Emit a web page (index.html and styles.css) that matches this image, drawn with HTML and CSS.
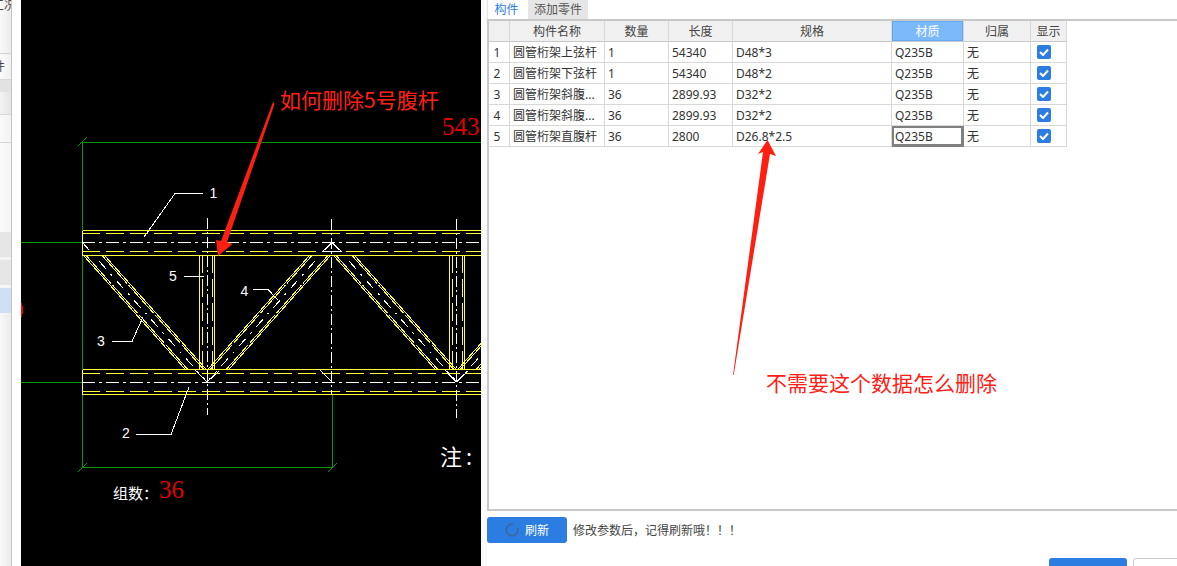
FILE: index.html
```html
<!DOCTYPE html>
<html lang="zh">
<head>
<meta charset="utf-8">
<title>构件</title>
<link rel="stylesheet" href="styles.css">
</head>
<body>
<div class="page">
  <div class="sidebar">
    <div class="strip">
      <div class="s-item s-a"><span>工况</span></div>
      <div class="s-item s-b"><span>件</span></div>
      <div class="s-item s-c"></div>
      <div class="s-item s-d"></div>
      <div class="s-item s-e"></div>
      <div class="s-item s-f"></div>
      <div class="s-item s-g"></div>
      <div class="s-item s-h"></div>
      <div class="s-item s-i"></div>
      <div class="s-item s-j"></div>
      <div class="s-item s-k"></div>
    </div>
    <div class="strip-gap"></div>
  </div>

  <svg class="cad" width="460" height="566" viewBox="21 0 460 566" shape-rendering="crispEdges">
    <defs>
      <g id="diag">
        <path class="ye" d="M83.1 255 184.9 369M104.1 255 205.9 369"/>
        <path class="ye-in" d="M85.6 255 187.4 369M101.6 255 203.4 369"/>
        <path class="wh-diag" d="M82 242 207 382"/>
      </g>
      <g id="post">
        <path class="ye" d="M199.5 255V369M214.5 255V369"/>
        <path class="ye-dash" d="M202.5 255V369M212.5 255V369"/>
      </g>
    </defs>
    <ellipse class="red-fill" cx="21" cy="310" rx="2" ry="7"/>
    <path class="gr" d="M82.5 467V142.5H481M21 242.5H82M21 382.5H82M82 467.5H332M332.5 467V394"/>
    <path class="gr-thin" d="M78 146 87 137M78 472 87 463M328 472 337 463"/>

    <use href="#diag"/>
    <use href="#diag" transform="translate(414 0) scale(-1 1)"/>
    <use href="#diag" transform="translate(250 0)"/>
    <use href="#diag" transform="translate(664 0) scale(-1 1)"/>
    <use href="#post"/>
    <use href="#post" transform="translate(249.5 0)"/>

    <path class="ye" d="M82.5 230.5H481M82.5 255.5H481M82.5 230.5V255.5M82.5 369.5H481M82.5 394.5H481M82.5 369.5V394.5"/>
    <path class="ye-dash" d="M82 233.5H481M82 251.5H481M82 373.5H481M82 391.5H481"/>
    <path class="wh-center" d="M82 242.5H481M82 382.5H481"/>
    <path class="wh-axis" d="M207.5 218V415M331.5 219V394M456.5 219V418"/>
    <path class="wh" d="M323 251H341L332 243ZM194 369 207 382 219 371M319 369 332 382M456 382 444 369M456 382 468 371"/>

    <path class="wh" d="M144 237 175 193.5H203M184 276.5H204M253 289.5H268L278 300M112 341.5H132L143 317M136 434.5H171L189 387"/>
    <text class="num" x="209.5" y="198">1</text>
    <text class="num" x="169" y="281">5</text>
    <text class="num" x="240.5" y="296">4</text>
    <text class="num" x="97" y="346">3</text>
    <text class="num" x="122" y="438">2</text>
    <text class="caption" x="113" y="499">组数：</text>
    <text class="figure" x="159" y="498">36</text>
    <text class="figure" x="442" y="135">543</text>
    <text class="note" x="440" y="465">注<tspan dx="4">:</tspan></text>
  </svg>

  <div class="gutter"></div>

  <main class="panel">
    <div class="tabs">
      <div class="tab tab-on">构件</div>
      <div class="tab tab-off">添加零件</div>
    </div>
    <div class="grid-box">
      <table class="grid">
        <colgroup>
          <col class="c-idx"><col class="c-name"><col class="c-qty"><col class="c-len"><col class="c-spec"><col class="c-mat"><col class="c-own"><col class="c-show">
        </colgroup>
        <thead>
          <tr><th></th><th>构件名称</th><th>数量</th><th>长度</th><th>规格</th><th class="th-on">材质</th><th>归属</th><th>显示</th></tr>
        </thead>
        <tbody>
          <tr><td class="idx">1</td><td>圆管桁架上弦杆</td><td>1</td><td>54340</td><td>D48*3</td><td>Q235B</td><td>无</td><td class="show"><span class="check"><svg width="10" height="8" viewBox="0 0 10 8"><path d="M1 4 4 7 9 1.5"/></svg></span></td></tr>
          <tr><td class="idx">2</td><td>圆管桁架下弦杆</td><td>1</td><td>54340</td><td>D48*2</td><td>Q235B</td><td>无</td><td class="show"><span class="check"><svg width="10" height="8" viewBox="0 0 10 8"><path d="M1 4 4 7 9 1.5"/></svg></span></td></tr>
          <tr><td class="idx">3</td><td>圆管桁架斜腹...</td><td>36</td><td>2899.93</td><td>D32*2</td><td>Q235B</td><td>无</td><td class="show"><span class="check"><svg width="10" height="8" viewBox="0 0 10 8"><path d="M1 4 4 7 9 1.5"/></svg></span></td></tr>
          <tr><td class="idx">4</td><td>圆管桁架斜腹...</td><td>36</td><td>2899.93</td><td>D32*2</td><td>Q235B</td><td>无</td><td class="show"><span class="check"><svg width="10" height="8" viewBox="0 0 10 8"><path d="M1 4 4 7 9 1.5"/></svg></span></td></tr>
          <tr><td class="idx">5</td><td>圆管桁架直腹杆</td><td>36</td><td>2800</td><td>D26.8*2.5</td><td class="td-on">Q235B</td><td>无</td><td class="show"><span class="check"><svg width="10" height="8" viewBox="0 0 10 8"><path d="M1 4 4 7 9 1.5"/></svg></span></td></tr>
        </tbody>
      </table>
    </div>
    <div class="actions">
      <button class="btn btn-refresh">
        <svg class="spin" width="14" height="14" viewBox="0 0 14 14"><circle cx="7" cy="7" r="5.8" pathLength="100" stroke-dasharray="84 16" transform="rotate(-20 7 7)"/></svg>
        <span>刷新</span>
      </button>
      <span class="hint">修改参数后，记得刷新哦！！！</span>
    </div>
    <div class="footer">
      <button class="btn btn-ok"></button>
      <button class="btn btn-cancel"></button>
    </div>
  </main>

  <svg class="marks" width="1177" height="566" viewBox="0 0 1177 566">
    <polygon class="mark" points="273,102 274.5,104 227,242 232.5,244 218,256 216,240 221,241"/>
    <polygon class="mark" points="733,375 763,152 758,154 767.5,140 776,156 770,154 733.7,375"/>
    <text class="mark-text" x="280" y="108">如何删除5号腹杆</text>
    <text class="mark-text" x="766" y="391">不需要这个数据怎么删除</text>
  </svg>
</div>
</body>
</html>
```

FILE: styles.css
```css
* { box-sizing: border-box; }
html, body { margin: 0; padding: 0; background: #fff; }
body {
  font-family: "Noto Sans", "Noto Sans CJK SC", sans-serif;
  font-size: 12px;
  color: #333;
}
.page {
  position: relative;
  display: flex;
  width: 1177px;
  height: 566px;
  overflow: hidden;
}

/* clipped window behind the drawing */
.sidebar { display: flex; flex: 0 0 21px; height: 566px; }
.strip {
  flex: 0 0 12px;
  display: flex;
  flex-direction: column;
  overflow: hidden;
  border-right: 1px solid #c4c4c4;
  background: linear-gradient(to right, #f9f9f9, #ececec);
}
.strip-gap { flex: 1; background: #fff; }
.s-item { display: flex; justify-content: flex-end; flex: none; overflow: hidden; white-space: nowrap; line-height: 14px; }
.s-item span { flex: none; color: #444; }
.s-a { height: 54px; border-bottom: 1px solid #d4d4d4; margin-bottom: 1px; }
.s-a span { margin-top: -1px; margin-right: -5px; height: 14px; }
.s-b { height: 25px; background: linear-gradient(to right, #fbfbfb, #f0f0f0); border-bottom: 1px solid #d8d8d8; align-items: center; }
.s-b span { margin-right: 6px; }
.s-c { height: 12px; background: #e2e2e2; }
.s-d { height: 23px; background: linear-gradient(to right, #f4f4f4, #e4e4e4); border-bottom: 1px solid #d8d8d8; }
.s-e { height: 28px; background: linear-gradient(to right, #fafafa, #f2f2f2); border-bottom: 1px solid #d8d8d8; }
.s-f { height: 89px; background: linear-gradient(to right, #fafafa, #f4f4f4); }
.s-g { height: 25px; background: #e6e6e6; }
.s-h { height: 3px; background: #f4f4f4; }
.s-i { height: 25px; background: #e6e6e6; }
.s-j { height: 3px; background: #f6f6f6; }
.s-k { height: 25px; background: #cfe0f5; }

/* CAD drawing */
.cad { flex: 0 0 460px; display: block; background: #000; }
.gr { fill: none; stroke: #009a00; stroke-width: 1; }
.gr-thin { fill: none; stroke: #009a00; stroke-width: 1; }
.ye { fill: none; stroke: #ffff33; stroke-width: 1; }
.ye-in { fill: none; stroke: #ffff33; stroke-width: 1; stroke-dasharray: 38 2; }
.ye-dash { fill: none; stroke: #ffff33; stroke-width: 1; stroke-dasharray: 18 6; }
.wh { fill: none; stroke: #fff; stroke-width: 1; }
.wh-center { fill: none; stroke: #fff; stroke-width: 1; stroke-dasharray: 13 4 3 4; }
.wh-axis { fill: none; stroke: #fff; stroke-width: 1; stroke-dasharray: 11 3 2 3; }
.wh-diag { fill: none; stroke: #fff; stroke-width: 1; stroke-dasharray: 10 7 2 7; }
.red-fill { fill: #f00000; }
.num { fill: #fff; font: 14px "Liberation Sans", sans-serif; }
.caption { fill: #fff; font: 15px "Noto Sans CJK SC", sans-serif; }
.figure { fill: #e00000; font: 25px "Liberation Serif", serif; }
.note { fill: #fff; font: 22px "Noto Sans CJK SC", sans-serif; }

.gutter { flex: 0 0 6px; background: #fafafa; }

/* right panel */
.panel { flex: 1; min-width: 0; display: flex; flex-direction: column; background: #fff; }
.tabs { display: flex; height: 19px; flex: none; }
.tab { display: flex; align-items: center; justify-content: center; height: 19px; line-height: 16px; }
.tab-on { width: 38px; margin-right: 3px; color: #2b7de1; border-left: 1px solid #e4e4e4; }
.tab-off { width: 60px; background: #e6e6e6; color: #555; }
.grid-box {
  flex: none;
  height: 492px;
  border: 2px solid #c8c8c8;
  border-right: 0;
}
.grid { table-layout: fixed; width: 578px; border-collapse: separate; border-spacing: 0; }
.c-idx { width: 21px; }
.c-name { width: 95px; }
.c-qty { width: 64px; }
.c-len { width: 64px; }
.c-spec { width: 159px; }
.c-mat { width: 72px; }
.c-own { width: 67px; }
.c-show { width: 36px; }
.grid th, .grid td {
  height: 21px;
  padding: 1px 3px 0 3px;
  border-right: 1px solid #d8d8d8;
  border-bottom: 1px solid #d8d8d8;
  white-space: nowrap;
  overflow: hidden;
  line-height: 16px;
}
.grid th { font-weight: 400; background: #f0f0f0; text-align: center; padding: 1px 0 0; color: #444; border-bottom-color: #c8c8c8; }
.grid th.th-on { background: #7cb9fa; color: #fff; box-shadow: inset 0 0 0 1px #62a8f2; }
.grid td.idx { text-align: center; padding: 1px 4px 0 0; background: #fff; }
.grid td.td-on { box-shadow: inset 0 0 0 2px #808080; border-right-color: #808080; border-bottom-color: #808080; }
.grid td.show { padding: 0 0 0 6px; }
.check {
  display: flex;
  align-items: center;
  justify-content: center;
  width: 14px;
  height: 14px;
  border-radius: 2px;
  background: #2b7de1;
}
.check path { fill: none; stroke: #fff; stroke-width: 2; }

.actions { display: flex; align-items: center; flex: none; height: 26px; margin-top: 6px; gap: 6px; }
.btn { border: 0; padding: 0; margin: 0; font: inherit; border-radius: 3px; }
.btn-refresh {
  display: flex;
  align-items: center;
  justify-content: center;
  gap: 6px;
  width: 80px;
  height: 26px;
  background: #2b7de1;
  color: #fff;
}
.spin circle { fill: none; stroke: #3f659c; stroke-width: 1.5; }
.hint { color: #444; }
.footer { display: flex; flex: none; gap: 6px; margin-top: 15px; padding-left: 562px; }
.btn-ok { flex: none; width: 78px; height: 30px; background: #2b7de1; }
.btn-cancel { flex: none; width: 78px; height: 30px; background: #fff; border: 1px solid #ccc; }

/* red annotations drawn over the screenshot */
.marks { position: absolute; left: 0; top: 0; pointer-events: none; }
.mark { fill: #ff1f10; }
.mark-text { fill: #ff2015; font: 21px "Noto Sans CJK SC", sans-serif; }
```
